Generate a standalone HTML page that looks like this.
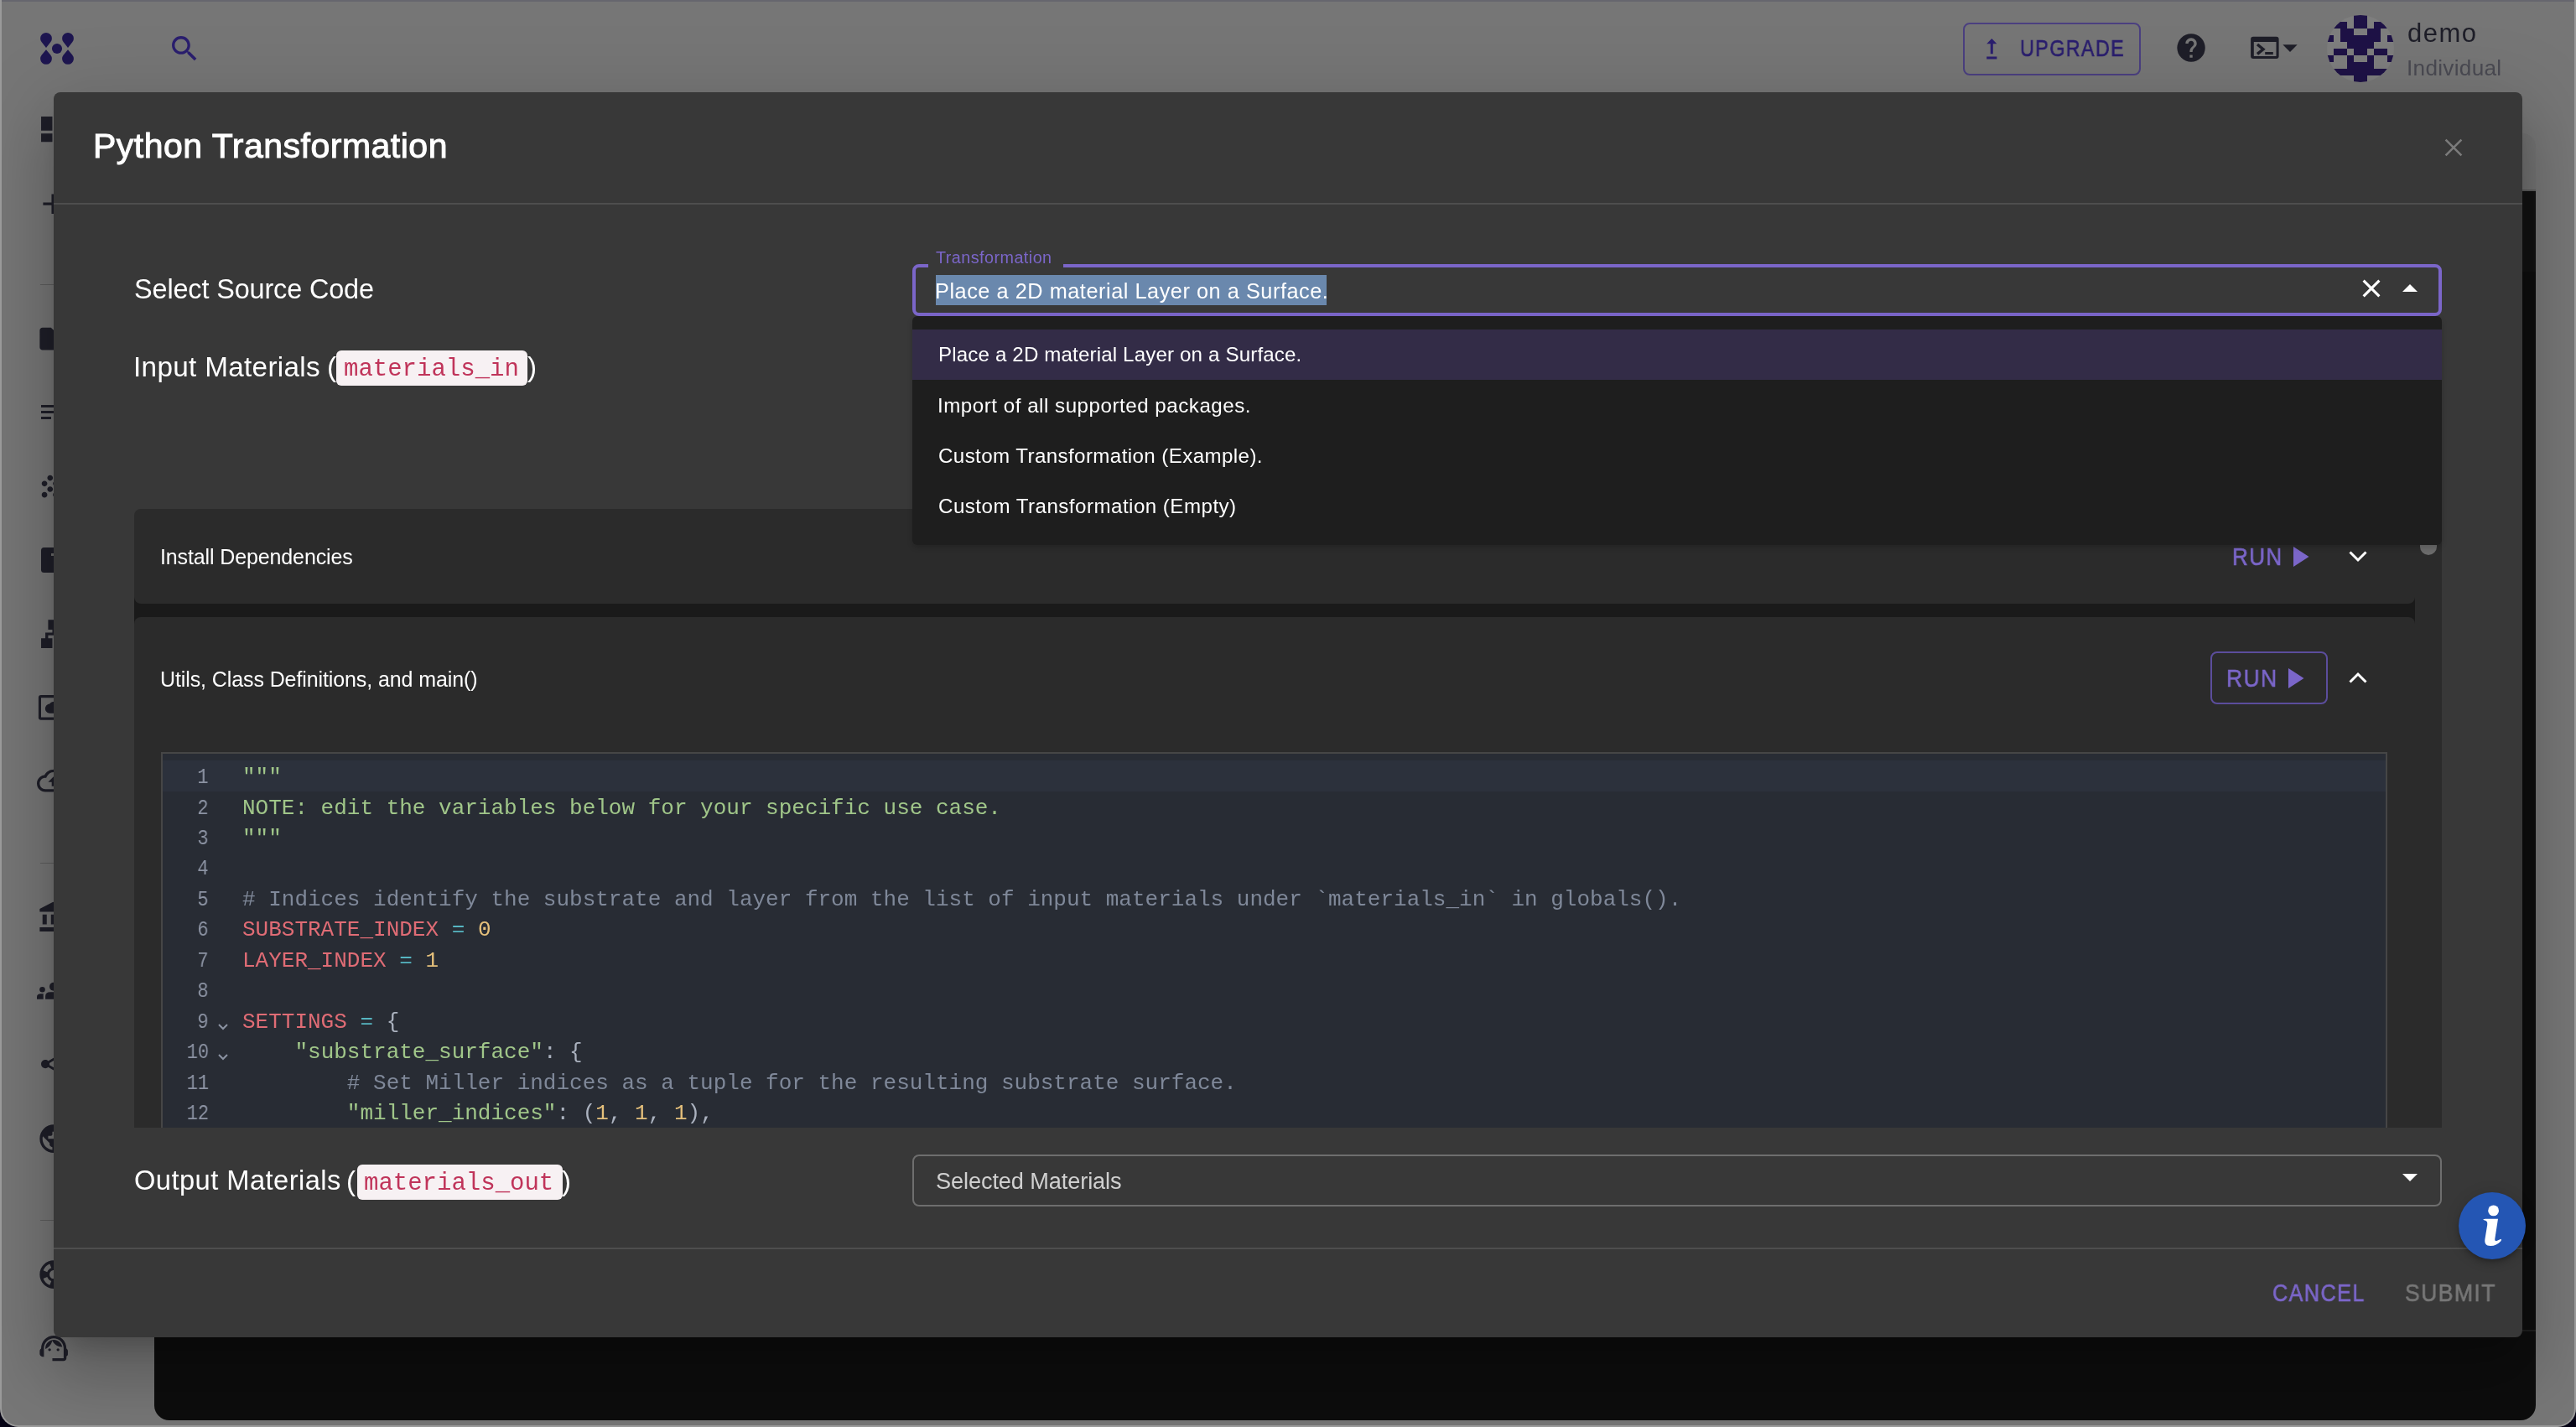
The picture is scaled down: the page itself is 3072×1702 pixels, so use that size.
<!DOCTYPE html>
<html><head><meta charset="utf-8">
<style>
*{margin:0;padding:0;box-sizing:border-box}
html,body{width:3072px;height:1702px;overflow:hidden;background:#050314;font-family:"Liberation Sans",sans-serif}
.a{position:absolute}
.t{position:absolute;white-space:nowrap;line-height:1;will-change:transform}
#win{position:absolute;left:0;top:0;width:3072px;height:1702px;background:#767676;border-radius:0 0 22px 22px;overflow:hidden}
#frame{position:absolute;left:0;top:0;width:3072px;height:1702px;border:2px solid #9a9a9a;border-top:0;border-radius:0 0 22px 22px;pointer-events:none}
.mono{font-family:"Liberation Mono",monospace}
</style></head><body>
<div id="win">
  <div class="a" style="left:0;top:0;width:3072px;height:2px;background:#66666e"></div>
  <div class="a" style="left:2700px;top:159px;width:324px;height:80px;background:#727272;border-radius:16px 16px 0 0"></div>
  <div class="a" style="left:2700px;top:226px;width:324px;height:2px;background:#5c5c5c"></div>
  <div class="a" style="left:184px;top:228px;width:2840px;height:1466px;background:#0d0d0d;border-radius:0 0 18px 18px"></div>
  <div class="a" style="left:184px;top:228px;width:2840px;height:96px;background:#111"></div>
    <div class="a" style="left:184px;top:1586px;width:2840px;height:2px;background:#1e1e1e"></div>
<div id="sidebar">
<svg class="a" style="left:44px;top:134px" width="40.3" height="40.3" viewBox="0 0 24 24" fill="#1e1e28"><path d="M3 13h8V3H3v10zm0 8h8v-6H3v6zm10 0h8V11h-8v10zm0-18v6h8V3h-8z"/></svg>
<svg class="a" style="left:43px;top:222.6px" width="40.3" height="40.3" viewBox="0 0 24 24" fill="#1e1e28"><path d="M19 13h-6v6h-2v-6H5v-2h6V5h2v6h6v2z"/></svg>
<div class="a" style="left:48px;top:339px;width:16px;height:1px;background:#5e5e5e;"></div>
<svg class="a" style="left:43.6px;top:384.3px" width="40.3" height="40.3" viewBox="0 0 24 24" fill="#1e1e28"><path d="M10 4H4c-1.1 0-1.99.9-1.99 2L2 18c0 1.1.9 2 2 2h16c1.1 0 2-.9 2-2V8c0-1.1-.9-2-2-2h-8l-2-2z"/></svg>
<div class="a" style="left:49px;top:483px;width:15px;height:3px;background:#1e1e28;"></div>
<div class="a" style="left:49px;top:490px;width:15px;height:3px;background:#1e1e28;"></div>
<div class="a" style="left:49px;top:497px;width:12px;height:3px;background:#1e1e28;"></div>
<svg class="a" style="left:43.2px;top:560.2px" width="40.3" height="40.3" viewBox="0 0 24 24" fill="#1e1e28"><path d="M10 12c-1.1 0-2 .9-2 2s.9 2 2 2 2-.9 2-2-.9-2-2-2zM6 8c-1.1 0-2 .9-2 2s.9 2 2 2 2-.9 2-2-.9-2-2-2zm0 8c-1.1 0-2 .9-2 2s.9 2 2 2 2-.9 2-2-.9-2-2-2zm12-8c1.1 0 2-.9 2-2s-.9-2-2-2-2 .9-2 2 .9 2 2 2zm-4 8c-1.1 0-2 .9-2 2s.9 2 2 2 2-.9 2-2-.9-2-2-2zm4-4c-1.1 0-2 .9-2 2s.9 2 2 2 2-.9 2-2-.9-2-2-2zm-4-4c-1.1 0-2 .9-2 2s.9 2 2 2 2-.9 2-2-.9-2-2-2zm-4-4c-1.1 0-2 .9-2 2s.9 2 2 2 2-.9 2-2-.9-2-2-2z"/></svg>
<div class="a" style="left:49px;top:653px;width:20px;height:30px;background:#1e1e28;border-radius:3.5px"></div>
<div class="a" style="left:60.8px;top:660px;width:4px;height:3px;background:#6b6b6b;"></div>
<svg class="a" style="left:44px;top:736.3px" width="40.3" height="40.3" viewBox="0 0 24 24" fill="#1e1e28"><path d="M13 22h8v-7h-3v-4h-5V9h3V2H8v7h3v2H6v4H3v7h8v-7H8v-2h8v2h-3z"/></svg>
<svg class="a" style="left:40px;top:820px" width="30" height="45" viewBox="40 820 30 45"><rect x="47.45" y="830.65" width="30" height="26.5" rx="1.5" fill="none" stroke="#1e1e28" stroke-width="3.1"/><path d="M53.9 845.3 c0-3.2 2.3-5.6 5.3-5.9 c1.3-1.7 3.2-2.6 5.5-2.6 h6 v13.9 h-11.3 c-3 0-5.5-2.3-5.5-5.4z" fill="#1e1e28"/></svg>
<svg class="a" style="left:44px;top:911.1px" width="40.3" height="40.3" viewBox="0 0 24 24" fill="#1e1e28"><path d="M19.35 10.04C18.67 6.59 15.64 4 12 4 9.11 4 6.6 5.64 5.35 8.04 2.34 8.36 0 10.91 0 14c0 3.31 2.69 6 6 6h13c2.76 0 5-2.240 5-5 0-2.64-2.05-4.78-4.65-4.96zM19 18H6c-2.21 0-4-1.79-4-4 0-2.05 1.53-3.76 3.56-3.97l1.07-.11.5-.95C8.08 7.14 9.94 6 12 6c2.62 0 4.88 1.86 5.39 4.43l.3 1.5 1.53.11c1.56.1 2.78 1.41 2.78 2.96 0 1.65-1.35 3-3 3zM8 13h2.55v3h2.9v-3H16l-4-4z"/></svg>
<div class="a" style="left:48px;top:1029px;width:16px;height:1px;background:#5e5e5e;"></div>
<svg class="a" style="left:43.6px;top:1074.3px" width="40.3" height="40.3" viewBox="0 0 24 24" fill="#1e1e28"><path d="M4 10v7h3v-7H4zm6 0v7h3v-7h-3zM2 22h19v-3H2v3zm14-12v7h3v-7h-3zm-4.5-9L2 6v2h19V6l-9.5-5z"/></svg>
<svg class="a" style="left:36px;top:1160px" width="40" height="40" viewBox="36 1160 40 40" fill="#1e1e28"><circle cx="50.5" cy="1180.2" r="3.3"/><path d="M44 1191.7 V1189 q0-3.7 5-3.7 h2.7 v6.4z"/><circle cx="64" cy="1176.7" r="5"/><path d="M54.1 1191.7 V1188 q0-4.7 6-4.7 h10 v8.4z"/></svg>
<svg class="a" style="left:43.5px;top:1249.4px" width="40.3" height="40.3" viewBox="0 0 24 24" fill="#1e1e28"><path d="M18 16.08c-.76 0-1.44.3-1.96.77L8.91 12.7c.05-.23.09-.46.09-.7s-.04-.47-.09-.7l7.05-4.11c.54.5 1.25.81 2.04.81 1.66 0 3-1.34 3-3s-1.34-3-3-3-3 1.34-3 3c0 .24.04.47.09.7L8.04 9.81C7.5 9.31 6.79 9 6 9c-1.66 0-3 1.34-3 3s1.34 3 3 3c.79 0 1.5-.31 2.04-.81l7.12 4.16c-.05.21-.08.43-.08.65 0 1.61 1.31 2.92 2.92 2.92 1.61 0 2.92-1.31 2.92-2.92s-1.31-2.92-2.92-2.92z"/></svg>
<svg class="a" style="left:43.8px;top:1337.5px" width="40.3" height="40.3" viewBox="0 0 24 24" fill="#1e1e28"><path d="M12 2C6.48 2 2 6.48 2 12s4.48 10 10 10 10-4.48 10-10S17.52 2 12 2zm-1 17.93c-3.95-.49-7-3.85-7-7.93 0-.62.08-1.21.21-1.790L9 15v1c0 1.1.9 2 2 2v1.93zm6.9-2.54c-.26-.81-1-1.39-1.9-1.39h-1v-3c0-.55-.45-1-1-1H8v-2h2c.55 0 1-.45 1-1V7h2c1.1 0 2-.9 2-2v-.41c2.93 1.19 5 4.06 5 7.41 0 2.08-.8 3.97-2.1 5.39z"/></svg>
<div class="a" style="left:48px;top:1455px;width:16px;height:1px;background:#5e5e5e;"></div>
<svg class="a" style="left:43.8px;top:1499.5px" width="40.3" height="40.3" viewBox="0 0 24 24" fill="#1e1e28"><path d="M12 2C6.48 2 2 6.48 2 12s4.48 10 10 10 10-4.48 10-10S17.52 2 12 2zm7.46 7.12l-2.78 1.15c-.51-1.36-1.58-2.44-2.95-2.94l1.15-2.78c2.1.8 3.77 2.47 4.58 4.57zM12 15c-1.66 0-3-1.34-3-3s1.34-3 3-3 3 1.34 3 3-1.34 3-3 3zM9.13 4.54l1.17 2.78c-1.38.5-2.47 1.59-2.98 2.97L4.54 9.13c.81-2.11 2.48-3.78 4.59-4.59zM4.54 14.87l2.78-1.15c.51 1.38 1.59 2.46 2.97 2.96l-1.17 2.78c-2.1-.81-3.77-2.48-4.58-4.59zm10.34 4.59l-1.15-2.78c1.37-.51 2.45-1.59 2.95-2.97l2.78 1.17c-.81 2.1-2.48 3.77-4.58 4.58z"/></svg>
<svg class="a" style="left:44px;top:1588px" width="40.3" height="40.3" viewBox="0 0 24 24" fill="#1e1e28"><path d="M21 12.22C21 6.73 16.74 3 12 3c-4.69 0-9 3.65-9 9.28-.6.34-1 .98-1 1.72v2c0 1.1.9 2 2 2h1v-6.1c0-3.87 3.13-7 7-7s7 3.13 7 7V19h-8v2h8c1.1 0 2-.9 2-2v-1.22c.59-.31 1-.92 1-1.54v-2.3c0-.7-.41-1.31-1-1.72z"/><circle cx="9" cy="13" r="1"/><circle cx="15" cy="13" r="1"/><path d="M18 11.03C17.52 8.18 15.04 6 12.05 6c-3.03 0-6.29 2.51-6.03 6.45 2.47-1.01 4.33-3.21 4.86-5.89 1.31 2.63 4 4.44 7.12 4.47z"/></svg>
</div>

<div id="header">
  <svg class="a" style="left:40px;top:30px" width="56" height="56" viewBox="40 30 56 56" fill="#1e1650">
    <path d="M55 57 L49.56 50.05 A6.9 6.9 0 1 1 60.44 50.05 Z"/>
    <path d="M81 57 L75.56 50.05 A6.9 6.9 0 1 1 86.44 50.05 Z"/>
    <path d="M55 59.3 L49.76 65.4 A6.9 6.9 0 1 0 60.24 65.4 Z"/>
    <path d="M81 59.3 L75.76 65.4 A6.9 6.9 0 1 0 86.24 65.4 Z"/>
    <circle cx="68" cy="58" r="6.05"/>
  </svg>
  <svg class="a" style="left:199.8px;top:37.9px" width="40.25" height="40.25" viewBox="0 0 24 24" fill="#2a1e6e"><path d="M15.5 14h-.79l-.28-.27C15.41 12.59 16 11.11 16 9.5 16 5.91 13.09 3 9.5 3S3 5.91 3 9.5 5.91 16 9.5 16c1.61 0 3.090-.59 4.23-1.57l.27.28v.79l5 4.99L20.49 19l-4.990-5zm-6 0C7.01 14 5 11.99 5 9.5S7.01 5 9.5 5 14 7.01 14 9.5 11.99 14 9.5 14z"/></svg>
  <div class="a" style="left:2341px;top:27px;width:212px;height:62.5px;border:2px solid #4b4080;border-radius:8px"></div>
  <svg class="a" style="left:2356.5px;top:39.8px" width="36.5" height="36.5" viewBox="0 0 24 24" fill="#2a1e6e"><path d="M16 18v2H8v-2h8zM11 7.99V16h2V7.99h3L12 4 8 7.990h3z"/></svg>
  <svg class="a" style="left:2593px;top:36.7px" width="40.08" height="40.08" viewBox="0 0 24 24"><circle cx="12" cy="12" r="10" fill="#1e1e28"/><path d="M13 19h-2v-2h2v2zm2.07-7.75l-.9.92C13.45 12.9 13 13.5 13 15h-2v-.5c0-1.1.45-2.1 1.17-2.83l1.24-1.26c.37-.36.59-.86.59-1.41 0-1.1-.9-2-2-2s-2 .9-2 2H8c0-2.21 1.79-4 4-4s4 1.79 4 4c0 .88-.36 1.68-.93 2.25z" fill="#767676"/></svg>
  <svg class="a" style="left:2680px;top:40px" width="64" height="34" viewBox="2680 40 64 34"><path fill-rule="evenodd" fill="#1e1e28" d="M2687.1 43.7 h27.5 a3 3 0 0 1 3 3 v20.4 a3 3 0 0 1 -3 3 h-27.5 a3 3 0 0 1 -3 -3 v-20.4 a3 3 0 0 1 3 -3 Z M2687.8 49.9 v17.1 h26.7 v-17.1 Z"/><path d="M2692 53 L2699 58.7 L2692 64.4" fill="none" stroke="#1e1e28" stroke-width="3.4"/><rect x="2701.2" y="62" width="9.6" height="3.1" fill="#1e1e28"/><path d="M2722.3 53.3 L2739.7 53.3 L2731 62 Z" fill="#1e1e28"/></svg>
  <div class="a" style="left:2775px;top:18px;width:80px;height:80px;border-radius:50%;overflow:hidden;background:#7e7e7e"><svg width="80" height="80" viewBox="0 0 80 80" style="display:block"><g fill="#1e1246"><rect x="32" y="0" width="8" height="8"/><rect x="40" y="0" width="8" height="8"/><rect x="8" y="8" width="8" height="8"/><rect x="16" y="8" width="8" height="8"/><rect x="32" y="8" width="8" height="8"/><rect x="40" y="8" width="8" height="8"/><rect x="56" y="8" width="8" height="8"/><rect x="64" y="8" width="8" height="8"/><rect x="16" y="16" width="8" height="8"/><rect x="24" y="16" width="8" height="8"/><rect x="48" y="16" width="8" height="8"/><rect x="56" y="16" width="8" height="8"/><rect x="0" y="24" width="8" height="8"/><rect x="16" y="24" width="8" height="8"/><rect x="24" y="24" width="8" height="8"/><rect x="32" y="24" width="8" height="8"/><rect x="40" y="24" width="8" height="8"/><rect x="48" y="24" width="8" height="8"/><rect x="56" y="24" width="8" height="8"/><rect x="72" y="24" width="8" height="8"/><rect x="24" y="32" width="8" height="8"/><rect x="32" y="32" width="8" height="8"/><rect x="40" y="32" width="8" height="8"/><rect x="48" y="32" width="8" height="8"/><rect x="8" y="40" width="8" height="8"/><rect x="16" y="40" width="8" height="8"/><rect x="32" y="40" width="8" height="8"/><rect x="40" y="40" width="8" height="8"/><rect x="56" y="40" width="8" height="8"/><rect x="64" y="40" width="8" height="8"/><rect x="0" y="48" width="8" height="8"/><rect x="24" y="48" width="8" height="8"/><rect x="48" y="48" width="8" height="8"/><rect x="72" y="48" width="8" height="8"/><rect x="24" y="56" width="8" height="8"/><rect x="32" y="56" width="8" height="8"/><rect x="40" y="56" width="8" height="8"/><rect x="48" y="56" width="8" height="8"/><rect x="8" y="64" width="8" height="8"/><rect x="16" y="64" width="8" height="8"/><rect x="24" y="64" width="8" height="8"/><rect x="32" y="64" width="8" height="8"/><rect x="40" y="64" width="8" height="8"/><rect x="48" y="64" width="8" height="8"/><rect x="56" y="64" width="8" height="8"/><rect x="64" y="64" width="8" height="8"/><rect x="32" y="72" width="8" height="8"/><rect x="40" y="72" width="8" height="8"/></g></svg></div>
</div>
  <div class="t" style="left:2409.05px;top:44.07px;font-size:27.33px;color:#2a1e6e;letter-spacing:1.600px;-webkit-text-stroke:0.6px #2a1e6e;transform:scaleX(0.8547);transform-origin:0 0;">UPGRADE</div>
<div class="t" style="left:2871.38px;top:24.79px;font-size:30.96px;color:#1e1e28;letter-spacing:1.485px;">demo</div>
<div class="t" style="left:2870.28px;top:67.86px;font-size:26.16px;color:#4a4a52;letter-spacing:0.294px;">Individual</div>

  <div id="modal" class="a" style="left:64px;top:110px;width:2944px;height:1485px;background:#383838;border-radius:8px;box-shadow:0 22px 30px -14px rgba(0,0,0,.2),0 48px 76px 6px rgba(0,0,0,.14),0 18px 92px 16px rgba(0,0,0,.12)"></div>
<div class="t" style="left:111.42px;top:154.05px;font-size:40.99px;color:#fff;letter-spacing:0.505px;-webkit-text-stroke:1.0px #fff;">Python Transformation</div>
<svg class="a" style="left:2912px;top:162px" width="28" height="28" viewBox="0 0 28 28"><path d="M4.6 4.6 L23.4 23.4 M23.4 4.6 L4.6 23.4" stroke="#7b7b7b" stroke-width="2.6"/></svg>
<div class="a" style="left:64px;top:242px;width:2944px;height:2px;background:#4e4e4e;"></div>
<div class="t" style="left:159.54px;top:328.86px;font-size:32.41px;color:#fff;letter-spacing:-0.129px;">Select Source Code</div>
<div class="t" style="left:158.92px;top:420.93px;font-size:33.28px;color:#fff;letter-spacing:0.321px;">Input Materials</div>
<div class="t" style="left:390.12px;top:420.91px;font-size:33.3px;color:#fff;letter-spacing:0.000px;">(</div>
<div class="a" style="left:401px;top:418px;width:228px;height:42px;background:#f7f1f3;border-radius:6px"></div>
<div class="t mono" style="left:410px;top:426.47px;font-size:29px;color:#c0345a;">materials_in</div>
<div class="t" style="left:628.83px;top:420.91px;font-size:33.3px;color:#fff;letter-spacing:0.000px;">)</div>
<div class="a" style="left:2880px;top:607px;width:32px;height:738px;background:#2b2b2b;"></div>
<div class="a" style="left:160px;top:712px;width:2720px;height:32px;background:#1a1a1a;"></div>
<div class="a" style="left:160px;top:607px;width:2720px;height:113px;background:#2b2b2b;border-radius:8px"></div>
<div class="a" style="left:160px;top:736px;width:2720px;height:609px;background:#2b2b2b;border-radius:8px 8px 0 0"></div>
<div class="t" style="left:191.29px;top:651.64px;font-size:25.0px;color:#fff;letter-spacing:-0.123px;">Install Dependencies</div>
<div class="t" style="left:190.66px;top:797.84px;font-size:25.0px;color:#fff;letter-spacing:-0.101px;">Utils, Class Definitions, and main()</div>
<div class="t" style="left:2661.62px;top:648.90px;font-size:29.65px;color:#7b66c9;letter-spacing:1.600px;-webkit-text-stroke:0.6px #7b66c9;transform:scaleX(0.8775);transform-origin:0 0;">RUN</div>
<svg class="a" style="left:2735px;top:652px" width="19" height="24" viewBox="0 0 19 24"><path d="M0 0 L18.5 12 L0 24 Z" fill="#7b66c9"/></svg>
<svg class="a" style="left:2800px;top:656px" width="24" height="16" viewBox="0 0 24 16"><path d="M2.5 2.5 L12 12 L21.5 2.5" fill="none" stroke="#fff" stroke-width="3"/></svg>
<div class="a" style="left:2636px;top:777px;width:140px;height:63px;background:transparent;border:2px solid #5b4d9c;border-radius:8px"></div>
<div class="t" style="left:2655.29px;top:794.20px;font-size:29.65px;color:#7b66c9;letter-spacing:1.600px;-webkit-text-stroke:0.6px #7b66c9;transform:scaleX(0.8917);transform-origin:0 0;">RUN</div>
<svg class="a" style="left:2729px;top:797px" width="19" height="24" viewBox="0 0 19 24"><path d="M0 0 L18.5 12 L0 24 Z" fill="#7b66c9"/></svg>
<svg class="a" style="left:2800px;top:800px" width="24" height="16" viewBox="0 0 24 16"><path d="M2.5 13.5 L12 4 L21.5 13.5" fill="none" stroke="#fff" stroke-width="3"/></svg>
<div class="a" style="left:192px;top:897px;width:2655px;height:448px;background:#282c34;border:2px solid #464646;border-bottom:0"></div>
<div class="a" style="left:194px;top:906.5px;width:2651px;height:37px;background:#2c313c;"></div>
<div class="a" style="left:194px;top:899px;width:2651px;height:446px;overflow:hidden"><div class="a" style="left:-194px;top:-899px;width:3072px;height:1702px"><div class="t mono" style="left:233.1px;top:914.07px;font-size:26px;color:#8c93a3;transform:scaleX(0.85);transform-origin:100% 0">1</div>
<div class="t mono" style="left:289px;top:914.07px;font-size:26px;color:#abb2bf;white-space:pre"><span style="color:#a0c689">&quot;&quot;&quot;</span></div>
<div class="t mono" style="left:233.1px;top:950.52px;font-size:26px;color:#8c93a3;transform:scaleX(0.85);transform-origin:100% 0">2</div>
<div class="t mono" style="left:289px;top:950.52px;font-size:26px;color:#abb2bf;white-space:pre"><span style="color:#a0c689">NOTE: edit the variables below for your specific use case.</span></div>
<div class="t mono" style="left:233.1px;top:986.97px;font-size:26px;color:#8c93a3;transform:scaleX(0.85);transform-origin:100% 0">3</div>
<div class="t mono" style="left:289px;top:986.97px;font-size:26px;color:#abb2bf;white-space:pre"><span style="color:#a0c689">&quot;&quot;&quot;</span></div>
<div class="t mono" style="left:233.1px;top:1023.42px;font-size:26px;color:#8c93a3;transform:scaleX(0.85);transform-origin:100% 0">4</div>
<div class="t mono" style="left:233.1px;top:1059.87px;font-size:26px;color:#8c93a3;transform:scaleX(0.85);transform-origin:100% 0">5</div>
<div class="t mono" style="left:289px;top:1059.87px;font-size:26px;color:#abb2bf;white-space:pre"><span style="color:#7f8899"># Indices identify the substrate and layer from the list of input materials under `materials_in` in globals().</span></div>
<div class="t mono" style="left:233.1px;top:1096.32px;font-size:26px;color:#8c93a3;transform:scaleX(0.85);transform-origin:100% 0">6</div>
<div class="t mono" style="left:289px;top:1096.32px;font-size:26px;color:#abb2bf;white-space:pre"><span style="color:#e06c75">SUBSTRATE_INDEX</span><span style="color:#abb2bf"> </span><span style="color:#56b6c2">=</span><span style="color:#abb2bf"> </span><span style="color:#e5c07b">0</span></div>
<div class="t mono" style="left:233.1px;top:1132.77px;font-size:26px;color:#8c93a3;transform:scaleX(0.85);transform-origin:100% 0">7</div>
<div class="t mono" style="left:289px;top:1132.77px;font-size:26px;color:#abb2bf;white-space:pre"><span style="color:#e06c75">LAYER_INDEX</span><span style="color:#abb2bf"> </span><span style="color:#56b6c2">=</span><span style="color:#abb2bf"> </span><span style="color:#e5c07b">1</span></div>
<div class="t mono" style="left:233.1px;top:1169.22px;font-size:26px;color:#8c93a3;transform:scaleX(0.85);transform-origin:100% 0">8</div>
<div class="t mono" style="left:233.1px;top:1205.67px;font-size:26px;color:#8c93a3;transform:scaleX(0.85);transform-origin:100% 0">9</div>
<svg class="a" style="left:259px;top:1219.6px" width="14" height="10" viewBox="0 0 14 10"><path d="M2 2 L7 7 L12 2" fill="none" stroke="#8c93a3" stroke-width="2"/></svg>
<div class="t mono" style="left:289px;top:1205.67px;font-size:26px;color:#abb2bf;white-space:pre"><span style="color:#e06c75">SETTINGS</span><span style="color:#abb2bf"> </span><span style="color:#56b6c2">=</span><span style="color:#abb2bf"> {</span></div>
<div class="t mono" style="left:217.5px;top:1242.12px;font-size:26px;color:#8c93a3;transform:scaleX(0.85);transform-origin:100% 0">10</div>
<svg class="a" style="left:259px;top:1256.0px" width="14" height="10" viewBox="0 0 14 10"><path d="M2 2 L7 7 L12 2" fill="none" stroke="#8c93a3" stroke-width="2"/></svg>
<div class="t mono" style="left:289px;top:1242.12px;font-size:26px;color:#abb2bf;white-space:pre"><span style="color:#abb2bf">    </span><span style="color:#a0c689">&quot;substrate_surface&quot;</span><span style="color:#abb2bf">: {</span></div>
<div class="t mono" style="left:217.5px;top:1278.57px;font-size:26px;color:#8c93a3;transform:scaleX(0.85);transform-origin:100% 0">11</div>
<div class="t mono" style="left:289px;top:1278.57px;font-size:26px;color:#abb2bf;white-space:pre"><span style="color:#abb2bf">        </span><span style="color:#7f8899"># Set Miller indices as a tuple for the resulting substrate surface.</span></div>
<div class="t mono" style="left:217.5px;top:1315.02px;font-size:26px;color:#8c93a3;transform:scaleX(0.85);transform-origin:100% 0">12</div>
<div class="t mono" style="left:289px;top:1315.02px;font-size:26px;color:#abb2bf;white-space:pre"><span style="color:#abb2bf">        </span><span style="color:#a0c689">&quot;miller_indices&quot;</span><span style="color:#abb2bf">: (</span><span style="color:#e5c07b">1</span><span style="color:#abb2bf">, </span><span style="color:#e5c07b">1</span><span style="color:#abb2bf">, </span><span style="color:#e5c07b">1</span><span style="color:#abb2bf">),</span></div>
</div></div>
<div class="a" style="left:2886px;top:560px;width:20px;height:102px;background:#6b6b6b;border-radius:10px"></div>
<div class="t" style="left:159.65px;top:1391.92px;font-size:32.7px;color:#fff;letter-spacing:0.436px;">Output Materials</div>
<div class="t" style="left:413.44px;top:1391.67px;font-size:33px;color:#fff;letter-spacing:0.000px;">(</div>
<div class="a" style="left:426px;top:1389px;width:245px;height:42px;background:#f7f1f3;border-radius:6px"></div>
<div class="t mono" style="left:434px;top:1397.37px;font-size:29px;color:#c0345a;">materials_out</div>
<div class="t" style="left:670.44px;top:1391.67px;font-size:33px;color:#fff;letter-spacing:0.000px;">)</div>
<div class="a" style="left:1088px;top:1377px;width:1824px;height:62px;background:transparent;border:2px solid #6e6e6e;border-radius:8px"></div>
<div class="t" style="left:1115.98px;top:1394.99px;font-size:27.18px;color:#d0d0d0;letter-spacing:-0.115px;">Selected Materials</div>
<svg class="a" style="left:2864px;top:1399px" width="20" height="11" viewBox="0 0 20 11"><path d="M1 1 L19 1 L10 10 Z" fill="#fff"/></svg>
<div class="a" style="left:64px;top:1488px;width:2944px;height:2px;background:#4e4e4e;"></div>
<div class="t" style="left:2710.0px;top:1528.39px;font-size:29.07px;color:#7b66c9;letter-spacing:1.600px;-webkit-text-stroke:0.6px #7b66c9;transform:scaleX(0.8688);transform-origin:0 0;">CANCEL</div>
<div class="t" style="left:2867.98px;top:1528.39px;font-size:29.07px;color:#777777;letter-spacing:1.600px;-webkit-text-stroke:0.6px #777777;transform:scaleX(0.9128);transform-origin:0 0;">SUBMIT</div>
<div class="a" style="left:1088px;top:315px;width:1824px;height:62px;background:transparent;border:4px solid #7b66c9;border-radius:8px"></div>
<div class="a" style="left:1107px;top:310px;width:161px;height:10px;background:#383838;"></div>
<div class="t" style="left:1116.16px;top:297.56px;font-size:19.77px;color:#7b66c9;letter-spacing:0.453px;">Transformation</div>
<div class="a" style="left:1116px;top:328px;width:466px;height:36px;background:#6a88ad;"></div>
<div class="t" style="left:1114.91px;top:334.59px;font-size:25.29px;color:#fff;letter-spacing:0.542px;">Place a 2D material Layer on a Surface.</div>
<svg class="a" style="left:2814px;top:330px" width="28" height="28" viewBox="0 0 28 28"><path d="M4.6 4.6 L23.4 23.4 M23.4 4.6 L4.6 23.4" stroke="#fff" stroke-width="3.1"/></svg>
<svg class="a" style="left:2864px;top:338px" width="20" height="11" viewBox="0 0 20 11"><path d="M1 10 L19 10 L10 1 Z" fill="#fff"/></svg>
<div class="a" style="left:1088px;top:377px;width:1824px;height:273px;background:#1e1e1e;border-radius:6px;box-shadow:0 3px 6px rgba(0,0,0,.18)"></div>
<div class="a" style="left:1088px;top:393px;width:1824px;height:60px;background:#332c47;"></div>
<div class="t" style="left:1118.51px;top:411.37px;font-size:24.13px;color:#fff;letter-spacing:0.145px;">Place a 2D material Layer on a Surface.</div>
<div class="t" style="left:1118.27px;top:471.57px;font-size:24.13px;color:#fff;letter-spacing:0.525px;">Import of all supported packages.</div>
<div class="t" style="left:1119.29px;top:531.57px;font-size:24.13px;color:#fff;letter-spacing:0.402px;">Custom Transformation (Example).</div>
<div class="t" style="left:1119.29px;top:592.07px;font-size:24.13px;color:#fff;letter-spacing:0.474px;">Custom Transformation (Empty)</div>
<div class="a" style="left:2932px;top:1422px;width:80px;height:80px;border-radius:50%;background:#2456b4;box-shadow:0 6px 10px rgba(0,0,0,.14),0 1px 18px rgba(0,0,0,.12),0 3px 5px -1px rgba(0,0,0,.2)"></div>
<svg class="a" style="left:2920px;top:1410px" width="104" height="104" viewBox="2920 1410 104 104"><circle cx="2973.6" cy="1443.9" r="6.4" fill="#fff"/><path fill="#fff" d="M2961.2 1454.6 C2962 1453.9 2963 1453.7 2964 1453.7 L2979 1453.7 L2975.3 1477.5 C2975 1479.8 2976.2 1480.6 2978 1479.8 L2982.5 1477.8 C2983.2 1478.5 2983 1479.5 2982.4 1480.2 C2979 1484 2975 1486 2970 1486 C2964.5 1486 2962.5 1482.5 2963.5 1477.5 L2966.2 1461 C2966.6 1458 2966 1456.2 2963 1455.6 C2962 1455.4 2961.4 1455.1 2961.2 1454.6 Z"/></svg>

  <div id="frame"></div>
</div>
</body></html>
